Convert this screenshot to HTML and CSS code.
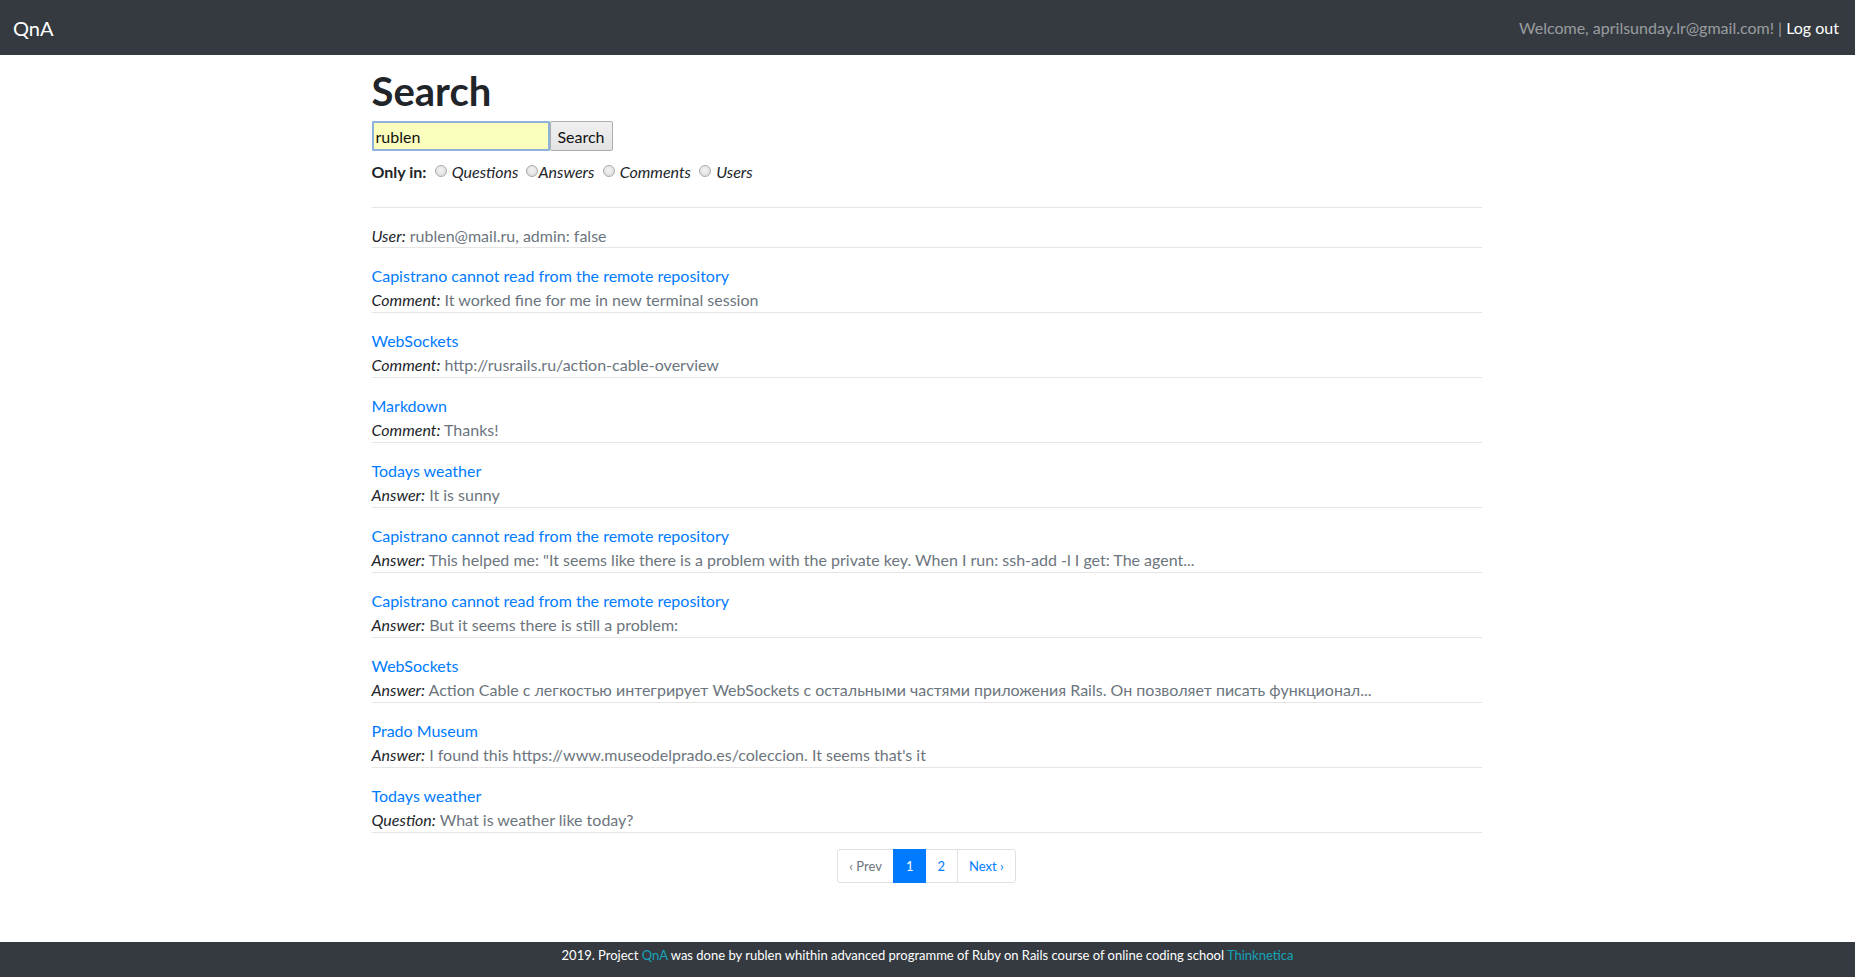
FILE: index.html
```html
<!DOCTYPE html>
<html lang="en">
<head>
<meta charset="utf-8">
<title>QnA - Search</title>
<link rel="stylesheet" href="styles.css">
</head>
<body>
<div class="page">
  <nav class="navbar">
    <a class="brand" href="#">QnA</a>
    <div class="user-nav"><span class="welcome">Welcome, aprilsunday.lr@gmail.com! |</span> <a class="logout" href="#">Log out</a></div>
  </nav>

  <main class="container">
    <h1 class="title">Search</h1>
    <form class="search-form">
      <input class="search-input" type="text" value="rublen">
      <button class="search-btn" type="button">Search</button>
    </form>
    <div class="only-in">
      <b>Only in:</b>
      <span class="radio"></span> <i>Questions</i>
      <span class="radio tight"></span><i>Answers</i>
      <span class="radio"></span> <i>Comments</i>
      <span class="radio"></span> <i>Users</i>
    </div>
    <hr class="divider first">

    <div class="results">
      <div class="result">
        <div class="line"><i class="label">User:</i> rublen@mail.ru, admin: false</div>
      </div>
      <div class="result">
        <a class="line link" href="#">Capistrano cannot read from the remote repository</a>
        <div class="line"><i class="label">Comment:</i> It worked fine for me in new terminal session</div>
      </div>
      <div class="result">
        <a class="line link" href="#">WebSockets</a>
        <div class="line"><i class="label">Comment:</i> http://rusrails.ru/action-cable-overview</div>
      </div>
      <div class="result">
        <a class="line link" href="#">Markdown</a>
        <div class="line"><i class="label">Comment:</i> Thanks!</div>
      </div>
      <div class="result">
        <a class="line link" href="#">Todays weather</a>
        <div class="line"><i class="label">Answer:</i> It is sunny</div>
      </div>
      <div class="result">
        <a class="line link" href="#">Capistrano cannot read from the remote repository</a>
        <div class="line"><i class="label">Answer:</i> This helped me: "It seems like there is a problem with the private key. When I run: ssh-add -l I get: The agent...</div>
      </div>
      <div class="result">
        <a class="line link" href="#">Capistrano cannot read from the remote repository</a>
        <div class="line"><i class="label">Answer:</i> But it seems there is still a problem:</div>
      </div>
      <div class="result">
        <a class="line link" href="#">WebSockets</a>
        <div class="line"><i class="label">Answer:</i> Action Cable с легкостью интегрирует WebSockets с остальными частями приложения Rails. Он позволяет писать функционал...</div>
      </div>
      <div class="result">
        <a class="line link" href="#">Prado Museum</a>
        <div class="line"><i class="label">Answer:</i> I found this https://www.museodelprado.es/coleccion. It seems that's it</div>
      </div>
      <div class="result">
        <a class="line link" href="#">Todays weather</a>
        <div class="line"><i class="label">Question:</i> What is weather like today?</div>
      </div>
    </div>

    <nav class="pager">
      <ul class="pagination">
        <li class="page-item"><a class="page-link muted" href="#">&lsaquo; Prev</a></li>
        <li class="page-item active"><a class="page-link" href="#">1</a></li>
        <li class="page-item"><a class="page-link" href="#">2</a></li>
        <li class="page-item"><a class="page-link" href="#">Next &rsaquo;</a></li>
      </ul>
    </nav>
  </main>

  <footer class="footer">
    2019. Project <a href="#">QnA</a> was done by rublen whithin advanced programme of Ruby on Rails course of online coding school <a href="#">Thinknetica</a>
  </footer>
</div>
</body>
</html>
```

FILE: styles.css
```css
* { box-sizing: border-box; }

html, body {
  margin: 0;
  padding: 0;
  height: 100%;
}

body {
  font-family: Lato, "Noto Sans", "Liberation Sans", sans-serif;
  font-size: 16px;
  line-height: 1.5;
  color: #212529;
  background: #fff;
}

.page {
  min-height: 100vh;
  display: flex;
  flex-direction: column;
}

a { text-decoration: none; }

/* navbar */
.navbar {
  height: 55px;
  background: #343a40;
  display: flex;
  align-items: center;
  justify-content: space-between;
  padding: 0 16px 0 13px;
  flex-shrink: 0;
}

.brand {
  color: #fff;
  font-size: 20px;
  line-height: 30px;
}

.user-nav {
  font-size: 16px;
  line-height: 24px;
}

.welcome { color: rgba(255, 255, 255, 0.5); }
.logout { color: #fff; }

/* main */
.container {
  flex: 1;
  width: 1112px;
  padding-right: 2px;
  margin: 0 auto;
}

.title {
  font-size: 40px;
  font-weight: 700;
  line-height: 48px;
  margin: 12px 0 6px;
  color: #212529;
}

.search-form {
  display: flex;
  height: 30px;
}

.search-input {
  width: 178px;
  height: 30px;
  margin: 0;
  border: 2px solid #8fb2dc;
  background: #fbffbd;
  font-family: inherit;
  font-size: 16px;
  padding: 0 2px;
  color: #111;
  outline: none;
  border-radius: 1px;
}

.search-btn {
  width: 63px;
  height: 30px;
  margin: 0;
  border: 1px solid #adadad;
  background: linear-gradient(#f0f0f0, #e3e3e3);
  font-family: inherit;
  font-size: 16px;
  color: #111;
  padding: 0;
  border-radius: 2px;
}

.only-in {
  margin-top: 9px;
  line-height: 24px;
  font-size: 16px;
}

.only-in b { font-weight: 700; }

.radio {
  display: inline-block;
  width: 12px;
  height: 12px;
  border-radius: 50%;
  border: 1px solid #a9a9a9;
  background: radial-gradient(circle at 50% 40%, #f4f4f4, #d8d8d8);
  vertical-align: 1px;
  margin: 0 1px 0 4px;
}

.radio.tight { margin-left: 3px; margin-right: 1px; }

.divider {
  border: 0;
  border-top: 1px solid rgba(0, 0, 0, 0.1);
  margin: 0;
}

.divider.first { margin-top: 23px; }

.results { margin-top: 16px; }

.result {
  border-bottom: 1px solid rgba(0, 0, 0, 0.1);
  margin-bottom: 16px;
  color: #6c757d;
}

.result .line {
  display: block;
  line-height: 24px;
  white-space: nowrap;
}

.result:first-child .line { line-height: 23px; }

.label { color: #212529; }

.link { color: #007bff; }

/* pagination */
.pager {
  display: flex;
  justify-content: center;
}

.pagination {
  display: flex;
  list-style: none;
  margin: 0;
  padding: 0;
}

.page-link {
  display: block;
  padding: 6px 11.5px;
  font-size: 13px;
  line-height: 20px;
  color: #007bff;
  border: 1px solid #dee2e6;
  margin-left: -1px;
  background: #fff;
}

.page-item:first-child .page-link {
  margin-left: 0;
  border-radius: 3px 0 0 3px;
}

.page-item:last-child .page-link { border-radius: 0 3px 3px 0; }

.page-link.muted { color: #6c757d; }

.page-item.active .page-link {
  background: #007bff;
  border-color: #007bff;
  color: #fff;
  position: relative;
  z-index: 1;
}

/* footer */
.footer {
  height: 35px;
  flex-shrink: 0;
  background: #343a40;
  color: #fff;
  text-align: center;
  font-size: 13px;
  line-height: 27px;
}

.footer a { color: #17a2b8; }
```
